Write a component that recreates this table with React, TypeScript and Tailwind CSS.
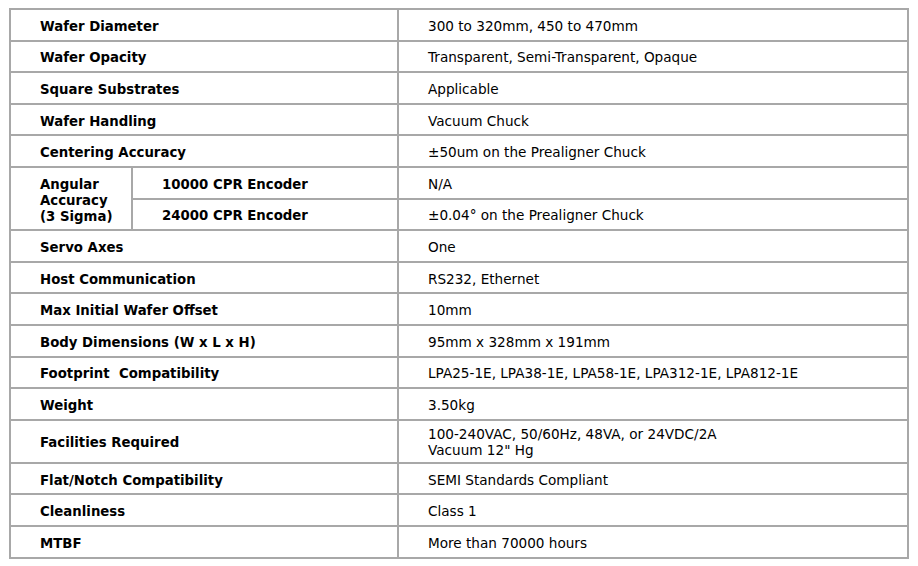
import React from 'react';

type Row = { label: string; value: React.ReactNode; tall?: boolean };

const before: Row[] = [
  { label: 'Wafer Diameter', value: '300 to 320mm, 450 to 470mm' },
  { label: 'Wafer Opacity', value: 'Transparent, Semi-Transparent, Opaque' },
  { label: 'Square Substrates', value: 'Applicable' },
  { label: 'Wafer Handling', value: 'Vacuum Chuck' },
  { label: 'Centering Accuracy', value: '±50um on the Prealigner Chuck' },
];

const after: Row[] = [
  { label: 'Servo Axes', value: 'One' },
  { label: 'Host Communication', value: 'RS232, Ethernet' },
  { label: 'Max Initial Wafer Offset', value: '10mm' },
  { label: 'Body Dimensions (W x L x H)', value: '95mm x 328mm x 191mm' },
  { label: 'Footprint\u00a0 Compatibility', value: 'LPA25-1E, LPA38-1E, LPA58-1E, LPA312-1E, LPA812-1E' },
  { label: 'Weight', value: '3.50kg' },
  {
    label: 'Facilities Required',
    value: (
      <>
        100-240VAC, 50/60Hz, 48VA, or 24VDC/2A
        <br />
        Vacuum 12" Hg
      </>
    ),
    tall: true,
  },
  { label: 'Flat/Notch Compatibility', value: 'SEMI Standards Compliant' },
  { label: 'Cleanliness', value: 'Class 1' },
  { label: 'MTBF', value: 'More than 70000 hours' },
];

const cell = 'border-2 border-[#a8a8a8] pl-[29px] pr-2 pb-0 align-middle';
const label = `${cell} pt-[4px] font-bold text-[13.3px]`;
const value = `${cell} pt-[2px] text-[13.6px]`;

const SpecRow: React.FC<{ row: Row }> = ({ row }) => (
  <tr className={row.tall ? 'h-[43px]' : 'h-[31.6px]'}>
    <td colSpan={2} className={label}>
      {row.label}
    </td>
    <td className={value}>{row.value}</td>
  </tr>
);

const App: React.FC = () => {
  return (
    <div className="w-[918px] h-[566px] bg-white pt-[8px] pl-[9px]">
      <table
        className="w-[900px] border-collapse table-fixed leading-[16px] text-black"
        style={{ fontFamily: '"DejaVu Sans", Verdana, sans-serif' }}
      >
        <colgroup>
          <col className="w-[122px]" />
          <col className="w-[266px]" />
          <col />
        </colgroup>
        <tbody>
          {before.map((r) => (
            <SpecRow key={r.label} row={r} />
          ))}
          <tr className="h-[31.6px]">
            <td rowSpan={2} className={label}>
              Angular
              <br />
              Accuracy
              <br />
              (3 Sigma)
            </td>
            <td className={label}>10000 CPR Encoder</td>
            <td className={value}>N/A</td>
          </tr>
          <tr className="h-[31.6px]">
            <td className={label}>24000 CPR Encoder</td>
            <td className={value}>±0.04° on the Prealigner Chuck</td>
          </tr>
          {after.map((r) => (
            <SpecRow key={r.label} row={r} />
          ))}
        </tbody>
      </table>
    </div>
  );
};

export default App;
